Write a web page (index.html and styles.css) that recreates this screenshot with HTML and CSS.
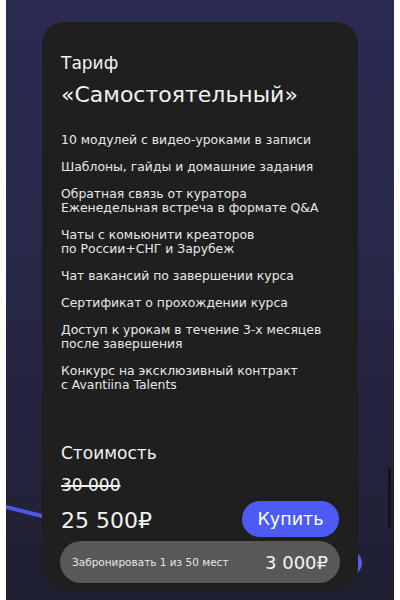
FILE: index.html
```html
<!DOCTYPE html>
<html lang="ru">
<head>
<meta charset="utf-8">
<title>Тариф</title>
<link rel="stylesheet" href="styles.css">
</head>
<body>
<div class="screen">
  <div class="deco-line"></div>
  <div class="deco-dot"></div>
  <div class="scrollbar"></div>
  <div class="card">
    <div class="label">Тариф</div>
    <div class="title">«Самостоятельный»</div>
    <ul class="features">
      <li>10 модулей с видео-уроками в записи</li>
      <li>Шаблоны, гайды и домашние задания</li>
      <li>Обратная связь от куратора<br>Еженедельная встреча в формате Q&amp;A</li>
      <li>Чаты с комьюнити креаторов<br>по России+СНГ и Зарубеж</li>
      <li>Чат вакансий по завершении курса</li>
      <li>Сертификат о прохождении курса</li>
      <li>Доступ к урокам в течение 3-х месяцев<br>после завершения</li>
      <li>Конкурс на эксклюзивный контракт<br>с Avantiina Talents</li>
    </ul>
    <div class="cost-label">Стоимость</div>
    <div class="old-price">30 000</div>
    <div class="price-row">
      <div class="price">25 500₽</div>
      <button class="buy">Купить</button>
    </div>
    <div class="reserve">
      <span class="reserve-text">Забронировать 1 из 50 мест</span>
      <span class="reserve-price">3 000₽</span>
    </div>
  </div>
</div>
</body>
</html>
```

FILE: styles.css
```css
html, body {
  margin: 0;
  padding: 0;
  background: #ffffff;
}

body {
  font-family: "DejaVu Sans", "Noto Sans", sans-serif;
}

.screen {
  position: relative;
  margin: 0 6px;
  height: 600px;
  padding-top: 22px;
  box-sizing: border-box;
  overflow: hidden;
  background: linear-gradient(180deg, #2b2b53 0%, #28284a 40%, #1f1f32 100%);
}

.deco-line {
  position: absolute;
  left: -4px;
  top: 504px;
  width: 60px;
  height: 4px;
  background: #4d58ea;
  transform: rotate(14deg);
  transform-origin: left center;
}

.deco-dot {
  position: absolute;
  left: 332px;
  top: 551px;
  width: 24px;
  height: 24px;
  border-radius: 50%;
  background: #5560ee;
}

.scrollbar {
  position: absolute;
  left: 382px;
  top: 468px;
  width: 3px;
  height: 60px;
  border-radius: 2px;
  background: #121218;
}

.card {
  position: relative;
  margin-left: 36px;
  width: 316px;
  height: 568px;
  box-sizing: border-box;
  padding: 31px 19px 5px;
  border-radius: 22px;
  background: #1f1f1f;
  color: #f2f2f2;
  display: flex;
  flex-direction: column;
}

.label {
  font-size: 17px;
  line-height: 20px;
}

.title {
  margin-top: 9px;
  font-size: 22px;
  line-height: 25px;
}

.features {
  list-style: none;
  margin: 26px 0 0;
  padding: 0;
  display: flex;
  flex-direction: column;
  gap: 13px;
  color: #e8e8e8;
  font-size: 12.4px;
  line-height: 14px;
}

.cost-label {
  margin-top: 51px;
  font-size: 17px;
  line-height: 20px;
}

.old-price {
  margin-top: 12px;
  font-size: 17px;
  line-height: 20px;
  text-decoration: line-through;
  text-decoration-thickness: 1.5px;
}

.price-row {
  margin-top: 6px;
  display: flex;
  align-items: center;
  justify-content: space-between;
}

.price {
  font-size: 22px;
  line-height: 26px;
  padding-top: 3px;
}

.buy {
  width: 97px;
  height: 36px;
  border: none;
  border-radius: 18px;
  background: #4c5bf4;
  color: #ffffff;
  font-family: inherit;
  font-size: 17.5px;
  padding: 0;
}

.reserve {
  margin: 4px -1px 0;
  height: 42px;
  border-radius: 21px;
  background: #585858;
  display: flex;
  align-items: center;
  justify-content: space-between;
  padding: 0 12px;
}

.reserve-text {
  font-size: 10.5px;
  color: #e6e6e6;
}

.reserve-price {
  font-size: 18px;
  color: #f4f4f4;
}
```
